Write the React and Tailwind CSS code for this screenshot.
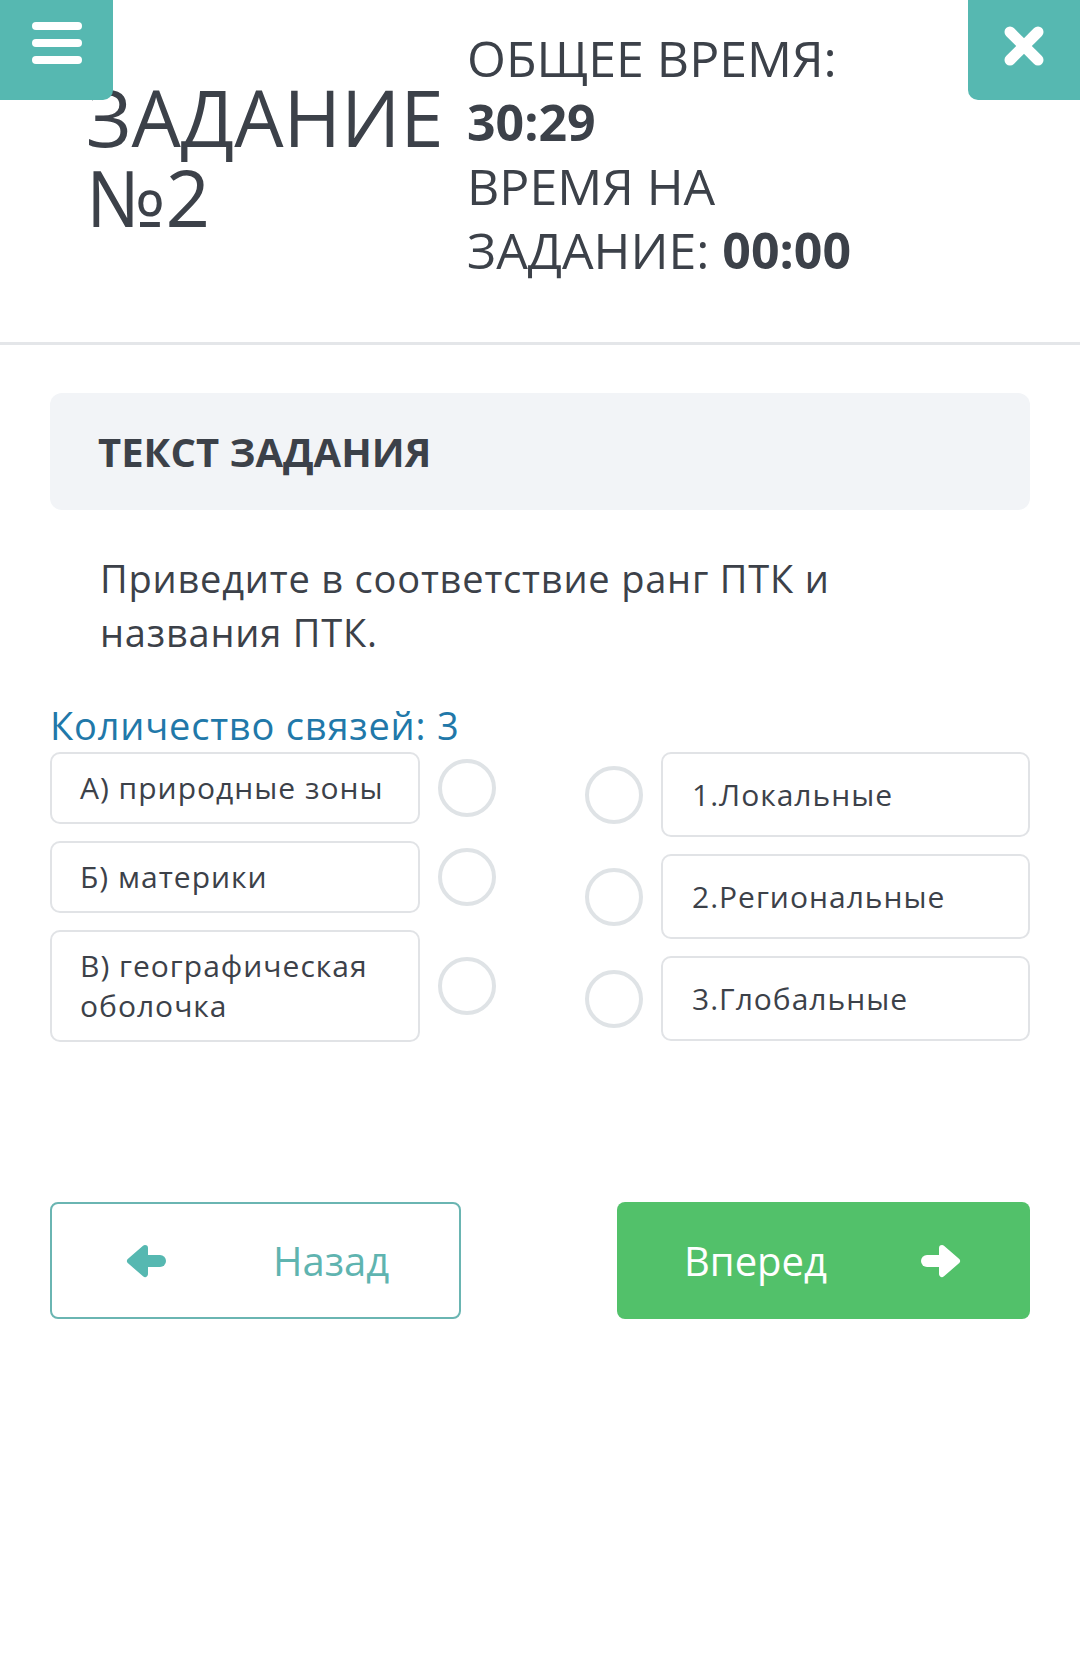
const leftItems = [
  { id: 'a', text: 'А) природные зоны' },
  { id: 'b', text: 'Б) материки' },
  { id: 'c', text: 'В) географическая оболочка' },
];

const rightItems = [
  { id: 1, text: '1.Локальные' },
  { id: 2, text: '2.Региональные' },
  { id: 3, text: '3.Глобальные' },
];

function Circle() {
  return <div className="w-[58px] h-[58px] shrink-0 rounded-full border-[4px] border-[#dfe3e6] bg-white" />;
}

function ArrowLeft({ className }) {
  return (
    <svg width="40" height="34" viewBox="0 0 40 34" className={className}>
      <path d="M19 4 L4 17 L19 30 Z" fill="currentColor" stroke="currentColor" strokeWidth="6" strokeLinejoin="round" />
      <line x1="14" y1="17" x2="34" y2="17" stroke="currentColor" strokeWidth="12" strokeLinecap="round" />
    </svg>
  );
}

function ArrowRight({ className }) {
  return (
    <svg width="40" height="34" viewBox="0 0 40 34" className={className}>
      <path d="M21 4 L36 17 L21 30 Z" fill="currentColor" stroke="currentColor" strokeWidth="6" strokeLinejoin="round" />
      <line x1="6" y1="17" x2="26" y2="17" stroke="currentColor" strokeWidth="12" strokeLinecap="round" />
    </svg>
  );
}

function App() {
  return (
    <div
      className="relative min-h-[1668px] w-[1080px] bg-white text-[#3c4149]"
      style={{ fontFamily: '"Open Sans", "Noto Sans", sans-serif' }}
    >
      {/* кнопка меню */}
      <button className="absolute left-0 top-0 w-[113px] h-[100px] bg-[#56b8b1] rounded-br-[10px] flex flex-col items-center gap-[9px] pt-[22px]">
        <span className="block w-[50px] h-[8px] rounded-full bg-white" />
        <span className="block w-[50px] h-[8px] rounded-full bg-white" />
        <span className="block w-[50px] h-[8px] rounded-full bg-white" />
      </button>

      {/* закрыть */}
      <button className="absolute right-0 top-0 w-[112px] h-[100px] bg-[#56b8b1] rounded-bl-[10px] flex items-start pl-[35px] pt-[26px] text-white">
        <svg width="42" height="40" viewBox="0 0 42 40">
          <line x1="7" y1="6" x2="35" y2="34" stroke="currentColor" strokeWidth="11" strokeLinecap="round" />
          <line x1="35" y1="6" x2="7" y2="34" stroke="currentColor" strokeWidth="11" strokeLinecap="round" />
        </svg>
      </button>

      {/* шапка */}
      <header className="flex pl-[86px] pb-[60px] border-b-[3px] border-[#e4e6e9]">
        <h1 className="w-[381px] shrink-0 pt-[77px] text-[78px] leading-[80px] font-normal">
          ЗАДАНИЕ
          <br />
          №2
        </h1>
        <div className="pt-[26px] text-[50px] leading-[64px]">
          ОБЩЕЕ ВРЕМЯ:
          <br />
          <b className="font-bold">30:29</b>
          <br />
          ВРЕМЯ НА
          <br />
          ЗАДАНИЕ: <b className="font-bold">00:00</b>
        </div>
      </header>

      <main className="px-[50px] pt-[48px]">
        <div className="h-[117px] rounded-[12px] bg-[#f2f4f7] flex items-center pl-[48px]">
          <h2 className="text-[40px] font-bold">ТЕКСТ ЗАДАНИЯ</h2>
        </div>

        <p className="pl-[50px] pt-[41px] text-[38px] leading-[54px] tracking-[0.8px] w-[880px]">
          Приведите в соответствие ранг ПТК и названия ПТК.
        </p>

        <div className="pt-[44px] text-[38px] leading-[44px] tracking-[0.8px] text-[#2178a9]">Количество связей: 3</div>

        <div className="mt-[5px] flex justify-between">
          <div className="flex flex-col gap-[17px]">
            {leftItems.map((item) => (
              <div key={item.id} className="flex items-center gap-[18px]">
                <div className="w-[370px] border-2 border-[#e1e3e6] rounded-[10px] px-[28px] py-[14px] text-[30px] leading-[40px] tracking-[1px]">
                  {item.text}
                </div>
                <Circle />
              </div>
            ))}
          </div>

          <div className="flex flex-col gap-[17px]">
            {rightItems.map((item) => (
              <div key={item.id} className="flex items-center gap-[18px]">
                <Circle />
                <div className="w-[369px] h-[85px] flex items-center border-2 border-[#e1e3e6] rounded-[10px] pl-[29px] text-[30px] tracking-[1px]">
                  {item.text}
                </div>
              </div>
            ))}
          </div>
        </div>

        <div className="mt-[160px] flex justify-between">
          <button className="w-[411px] h-[117px] flex items-center pl-[74px] gap-[107px] border-2 border-[#6ab5b2] rounded-[8px] text-[#5fb4b0] text-[40px]">
            <ArrowLeft className="text-[#56b8b1]" />
            <span>Назад</span>
          </button>
          <button className="w-[413px] h-[117px] flex items-center pl-[67px] gap-[94px] rounded-[8px] bg-[#52c16a] text-white text-[40px]">
            <span>Вперед</span>
            <ArrowRight />
          </button>
        </div>
      </main>
    </div>
  );
}

export default App;
